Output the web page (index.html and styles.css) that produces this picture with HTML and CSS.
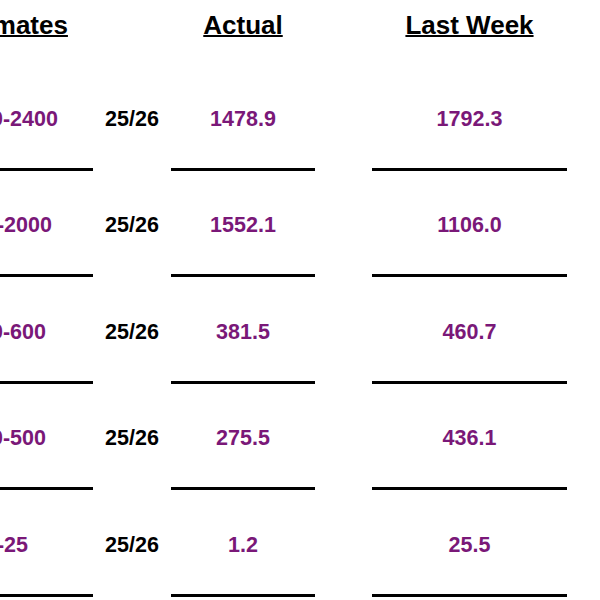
FILE: index.html
```html
<!DOCTYPE html>
<html>
<head>
<meta charset="utf-8">
<link rel="stylesheet" href="styles.css">
</head>
<body>
<div class="page">
  <div class="table">
    <div class="head"><span>Estimates</span></div>
    <div></div>
    <div class="head"><span>Actual</span></div>
    <div></div>
    <div class="head"><span>Last Week</span></div>

    <div class="cell"><div class="val">1800-2400</div><div class="line"></div></div>
    <div class="cell"><div class="yr">25/26</div></div>
    <div class="cell"><div class="val">1478.9</div><div class="line"></div></div>
    <div></div>
    <div class="cell"><div class="val">1792.3</div><div class="line"></div></div>

    <div class="cell"><div class="val">800-2000</div><div class="line"></div></div>
    <div class="cell"><div class="yr">25/26</div></div>
    <div class="cell"><div class="val">1552.1</div><div class="line"></div></div>
    <div></div>
    <div class="cell"><div class="val">1106.0</div><div class="line"></div></div>

    <div class="cell"><div class="val">400-600</div><div class="line"></div></div>
    <div class="cell"><div class="yr">25/26</div></div>
    <div class="cell"><div class="val">381.5</div><div class="line"></div></div>
    <div></div>
    <div class="cell"><div class="val">460.7</div><div class="line"></div></div>

    <div class="cell"><div class="val">300-500</div><div class="line"></div></div>
    <div class="cell"><div class="yr">25/26</div></div>
    <div class="cell"><div class="val">275.5</div><div class="line"></div></div>
    <div></div>
    <div class="cell"><div class="val">436.1</div><div class="line"></div></div>

    <div class="cell"><div class="val">5-25</div><div class="line"></div></div>
    <div class="cell"><div class="yr">25/26</div></div>
    <div class="cell"><div class="val">1.2</div><div class="line"></div></div>
    <div></div>
    <div class="cell"><div class="val">25.5</div><div class="line"></div></div>
  </div>
</div>
</body>
</html>
```
FILE: styles.css
```css
html, body {
  margin: 0;
  padding: 0;
  background: #ffffff;
}
.page {
  width: 600px;
  height: 600px;
  overflow: hidden;
  font-family: "Liberation Sans", Arial, sans-serif;
  font-weight: bold;
}
.table {
  display: grid;
  grid-template-columns: 173px 78px 144px 57px 195px;
  row-gap: 42.5px;
  margin-left: -80px;
  padding-top: 10px;
}
.head {
  text-align: center;
  font-size: 26px;
  line-height: 30px;
  color: #000;
  white-space: nowrap;
  margin-bottom: 24px;
}
.head span {
  text-decoration: underline;
  text-decoration-thickness: 2px;
}
.cell {
  display: flex;
  flex-direction: column;
  align-items: center;
}
.val, .yr {
  font-size: 21.5px;
  line-height: 24px;
  white-space: nowrap;
}
.val {
  color: #7a1878;
}
.yr {
  color: #000;
}
.line {
  align-self: stretch;
  height: 3px;
  background: #000;
  margin-top: 37px;
}
```
